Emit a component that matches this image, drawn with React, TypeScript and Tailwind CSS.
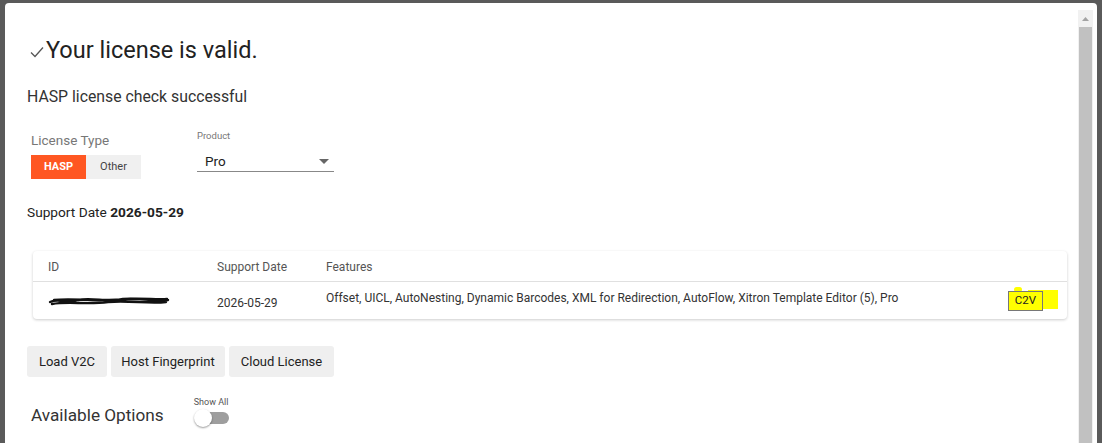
export default function App() {
  const features =
    "Offset, UICL, AutoNesting, Dynamic Barcodes, XML for Redirection, AutoFlow, Xitron Template Editor (5), Pro";

  return (
    <div className="h-[443px] w-[1102px] overflow-hidden bg-[#5a5a5a] pl-[5px] pr-[5px] pt-[3px] font-['Roboto',sans-serif]">
      <div className="flex h-[460px] rounded-[4px] bg-white">
        <div className="flex-1 pl-[22px]">
          {/* title */}
          <div className="mt-[32px] flex items-center text-[#222]">
            <svg width="14" height="12" viewBox="0 0 14 12" className="ml-[3px] mt-[3px] text-[#555]">
              <path d="M1 6.5 L5 10.5 L13 1.5" fill="none" stroke="currentColor" strokeWidth="1.3" />
            </svg>
            <h1 className="ml-[2px] text-[23.5px] leading-[30px]">Your license is valid.</h1>
          </div>

          <p className="mt-[22px] text-[15.8px] leading-[20px] text-[#333]">HASP license check successful</p>

          {/* license type + product */}
          <div className="mt-[25px] flex items-start">
            <div className="ml-[4px]">
              <div className="text-[13.5px] leading-[17px] text-[#777]">License Type</div>
              <div className="mt-[6px] flex h-[24px] text-[11px]">
                <button className="w-[55px] bg-[#ff5722] font-bold text-white">HASP</button>
                <button className="w-[55px] bg-[#f0f0f0] text-[#444]">Other</button>
              </div>
            </div>
            <div className="ml-[56px] mt-[-2px] w-[137px]">
              <div className="text-[9.5px] leading-[12px] text-[#777]">Product</div>
              <div className="mt-[10px] flex h-[20px] items-center justify-between border-b border-[#888] pl-[8px] pr-[5px]">
                <span className="text-[13.5px] text-[#222]">Pro</span>
                <svg width="10" height="5" viewBox="0 0 10 5" className="text-[#666]">
                  <path d="M0 0 L10 0 L5 5 Z" fill="currentColor" />
                </svg>
              </div>
            </div>
          </div>

          <div className="mt-[25px] text-[13.7px] leading-[17px] text-[#222]">
            Support Date <span className="font-bold">2026-05-29</span>
          </div>

          {/* table */}
          <div className="ml-[6px] mr-[11px] mt-[30px] rounded-[4px] bg-white shadow-[0_1px_3px_rgba(0,0,0,0.2)]">
            <div className="flex h-[31px] items-center border-b border-[#e0e0e0] pt-[1px] text-[12px] text-[#555]">
              <div className="w-[184px] pl-[15px]">ID</div>
              <div className="w-[109px]">Support Date</div>
              <div>Features</div>
            </div>
            <div className="flex h-[37px] items-center text-[12px] text-[#333]">
              <div className="w-[184px] pl-[15px]">
                <svg width="122" height="12" viewBox="0 0 122 12">
                  <path
                    d="M2 7 C10 3 20 9 30 5 C45 2 60 8 75 4 C90 2 105 7 120 5 M4 9 C20 6 40 10 60 7 C80 5 100 9 118 7 M6 5 C25 3 50 7 80 4 C95 3 110 5 119 4"
                    fill="none"
                    stroke="#111"
                    strokeWidth="2.4"
                    strokeLinecap="round"
                  />
                </svg>
              </div>
              <div className="w-[109px] pt-[4px]">2026-05-29</div>
              <div className="flex-1 self-start pt-[7px]">{features}</div>
              <div className="relative mr-[9px] flex h-[20px] w-[50px] items-center">
                <div className="absolute left-[20px] top-[-1px] h-[19px] w-[30px] bg-[#ffff00]" />
                <div className="absolute left-[6px] top-[-4px] h-[5px] w-[8px] rounded-full bg-[#ffff00]" />
                <div className="relative flex h-[20px] w-[35px] items-center justify-center border border-[#777] bg-[#ffff00] text-[11.5px] text-[#222]">
                  C2V
                </div>
              </div>
            </div>
          </div>

          {/* action buttons */}
          <div className="mt-[27px] flex gap-[4px] text-[13px] text-[#222]">
            <button className="h-[31px] w-[80px] rounded-[3px] bg-[#efefef]">Load V2C</button>
            <button className="h-[31px] w-[114px] rounded-[3px] bg-[#efefef]">Host Fingerprint</button>
            <button className="h-[31px] w-[105px] rounded-[3px] bg-[#efefef]">Cloud License</button>
          </div>

          {/* available options */}
          <div className="mt-[19px] flex items-start">
            <div className="ml-[4px] mt-[7px] text-[17.2px] text-[#333]">Available Options</div>
            <div className="ml-[30px]">
              <div className="text-[9px] leading-[12px] text-[#555]">Show All</div>
              <div className="relative mt-[3px] h-[14px] w-[35px]">
                <div className="absolute left-[3px] top-[1px] h-[12px] w-[32px] rounded-full bg-[#9e9e9e]" />
                <div className="absolute left-0 top-[-2px] h-[18px] w-[18px] rounded-full bg-white shadow-[0_1px_2px_rgba(0,0,0,0.4)]" />
              </div>
            </div>
          </div>
        </div>

        {/* scrollbar */}
        <div className="mr-[4px] mt-[7px] flex w-[15px] flex-col bg-[#f1f1f1]">
          <div className="flex h-[17px] items-center justify-center">
            <svg width="7" height="4" viewBox="0 0 7 4">
              <path d="M0 4 L3.5 0 L7 4 Z" fill="#a3a3a3" />
            </svg>
          </div>
          <div className="mx-[1px] flex-1 bg-[#c1c1c1]" />
        </div>
      </div>
    </div>
  );
}
